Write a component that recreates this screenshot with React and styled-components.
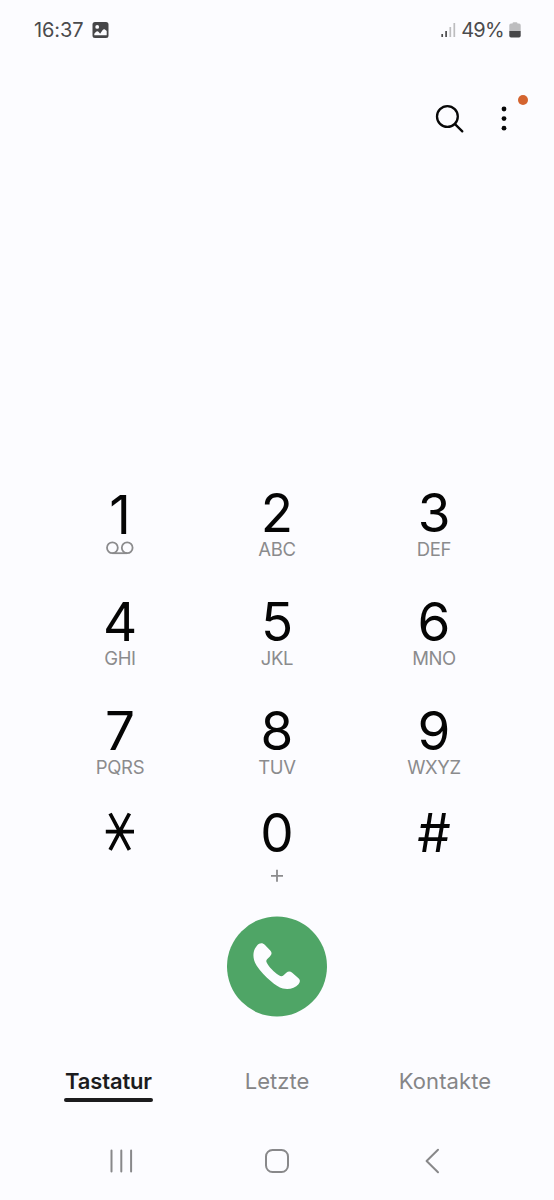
import React from 'react';
import styled, { createGlobalStyle } from 'styled-components';

const GlobalStyle = createGlobalStyle`
  * {
    box-sizing: border-box;
  }

  body {
    margin: 0;
    background: #fcfcff;
    font-family: Inter, 'Liberation Sans', sans-serif;
  }

  svg {
    display: block;
  }
`;

const Screen = styled.main`
  width: 554px;
  height: 1200px;
  display: flex;
  flex-direction: column;
  overflow: hidden;
  background: #fcfcff;
`;

const StatusBar = styled.header`
  height: 59px;
  padding: 0 33px 0 34px;
  display: flex;
  align-items: center;
  justify-content: space-between;
  color: #4b4b4d;
  font-size: 20px;
`;

const StatusGroup = styled.div`
  display: flex;
  align-items: center;
  gap: ${({ $gap }) => $gap}px;
`;

const StatusText = styled.span`
  letter-spacing: ${({ $spacing }) => $spacing}px;
  line-height: 24px;
`;

const Toolbar = styled.div`
  height: 117px;
  padding: 32px 23px 0 0;
  display: flex;
  justify-content: flex-end;
`;

const IconButton = styled.button`
  width: 55px;
  height: 55px;
  padding: 0;
  display: flex;
  align-items: center;
  justify-content: center;
  position: relative;
  border: 0;
  background: none;
`;

const Badge = styled.span`
  position: absolute;
  top: 4px;
  right: 3px;
  width: 10px;
  height: 10px;
  border-radius: 50%;
  background: #d4642f;
`;

const NumberDisplay = styled.div`
  height: 312px;
`;

const Keypad = styled.section`
  padding: 0 41.5px;
  display: grid;
  grid-template-columns: repeat(3, 157px);
  grid-template-rows: 109px 109px 102px 108px;
`;

const Key = styled.button`
  padding: 0;
  display: flex;
  flex-direction: column;
  align-items: center;
  border: 0;
  background: none;
  font-family: inherit;
`;

const Digit = styled.span`
  height: 50px;
  padding-top: ${({ $drop }) => $drop || 0}px;
  color: #050505;
  font-size: 53px;
  line-height: 50px;
`;

const Symbol = styled.span`
  height: 50px;
  padding-top: 4px;
`;

const Letters = styled.span`
  height: 22px;
  color: #8b8b8d;
  font-size: 18.5px;
  font-weight: 400;
  letter-spacing: -0.35px;
  line-height: 23px;
`;

const Voicemail = styled.span`
  padding-top: 3px;
`;

const Plus = styled.span`
  padding-top: 11px;
`;

const CallRow = styled.div`
  height: 101px;
  display: flex;
  justify-content: center;
`;

const CallButton = styled.button`
  width: 100px;
  height: 101px;
  padding: 0;
  border: 0;
  background: none;
`;

const Tabs = styled.nav`
  height: 105px;
  padding: 50px 30px 0;
  display: grid;
  grid-template-columns: 157px 180px 156px;
`;

const Tab = styled.button`
  height: 36px;
  padding: 0;
  justify-self: center;
  display: flex;
  flex-direction: column;
  border: 0;
  background: none;
  color: ${({ $active }) => ($active ? '#1c1c1e' : '#858587')};
  font-family: inherit;
  font-size: 22px;
  font-weight: ${({ $active }) => ($active ? 600 : 400)};
  letter-spacing: ${({ $spacing }) => $spacing}px;
  line-height: 28px;
`;

const TabLabel = styled.span`
  padding: 0 1px;
`;

const Underline = styled.span`
  align-self: stretch;
  height: 4px;
  margin-top: 3px;
  border-radius: 2px;
  background: #1c1c1e;
`;

const SystemNav = styled.footer`
  height: 78px;
  padding: 0 43.5px;
  display: grid;
  grid-template-columns: repeat(3, 155.5px);
  align-items: center;
  justify-items: center;
`;

const PhotoIcon = () => (
  <svg width="17" height="16" viewBox="-0.5 0 17 16">
    <path
      fillRule="evenodd"
      fill="#464648"
      d="M2.5 0h11A2.5 2.5 0 0 1 16 2.5v11a2.5 2.5 0 0 1-2.5 2.5h-11A2.5 2.5 0 0 1 0 13.5v-11A2.5 2.5 0 0 1 2.5 0ZM4.7 3a1.9 1.9 0 1 0 0 3.8 1.9 1.9 0 0 0 0-3.8ZM1.8 11.8c2-3 3.2-3.4 4.8-1.3l1 1.2 2.6-3.6c1-1.3 2-1.1 4 .9v4.2H1.8Z"
    />
  </svg>
);

const SignalIcon = () => (
  <svg width="15" height="16" viewBox="0 0 15 16">
    <path d="M1.2 12v3M5.1 9v6" stroke="#4b4b4d" strokeWidth="1.7" />
    <path d="M9.3 5v10M13.3 1v14" stroke="#bdbdbf" strokeWidth="1.7" />
  </svg>
);

const BatteryIcon = () => (
  <svg width="12" height="16" viewBox="0 0 12 16">
    <path d="M3.5 1.5Q3.5.3 4.7.3h2.6q1.2 0 1.2 1.2H10Q11.7 1.5 11.7 3.2V9H.3V3.2Q.3 1.5 2 1.5Z" fill="#bdbdbf" />
    <path d="M.3 9h11.4v4.7q0 1.8-1.7 1.8H2Q.3 15.5.3 13.7Z" fill="#464648" />
  </svg>
);

const SearchIcon = () => (
  <svg width="30" height="30" viewBox="0 0 30 30" fill="none" stroke="#080808" strokeWidth="2.3" strokeLinecap="round">
    <circle cx="13.4" cy="12.5" r="10.4" />
    <path d="m21 20.1 7.3 7.3" />
  </svg>
);

const MoreIcon = () => (
  <svg width="6" height="26" viewBox="0 0 6 26" fill="#080808">
    <circle cx="3" cy="3" r="2.4" />
    <circle cx="3" cy="12.6" r="2.4" />
    <circle cx="3" cy="22.2" r="2.4" />
  </svg>
);

const VoicemailIcon = () => (
  <svg width="28" height="14" viewBox="0 0 28 14" fill="none" stroke="#8b8b8d" strokeWidth="1.8">
    <circle cx="6.4" cy="6.8" r="5.4" />
    <circle cx="21.2" cy="6.8" r="5.4" />
    <path d="M6.4 12.2h14.8" />
  </svg>
);

const StarIcon = () => (
  <svg width="30" height="40" viewBox="0 0 30 40" stroke="#050505" strokeWidth="3.7">
    <path d="M.8 19.7H29M5.1 1.5l19.3 36.4M24.4 1.5 5.1 37.9" />
  </svg>
);

const PlusIcon = () => (
  <svg width="14" height="14" viewBox="0 0 14 14" stroke="#8b8b8d" strokeWidth="1.8">
    <path d="M1 6.8h12M7 .8v12" />
  </svg>
);

const PhoneIcon = () => (
  <svg width="100" height="101" viewBox="0 -0.5 100 101">
    <circle cx="50" cy="50" r="50" fill="#4fa566" />
    <path
      fill="#fcfcff"
      d="M29.9 29.2C32.5 26.3 35.5 26.1 38 28.5L43 33.7C45.1 36 45 37.7 42.9 39.9L40.3 42.4C39.2 43.5 39 44.5 39.7 46C42 50.6 46.8 55.4 51.9 58.8C53.8 60 55.2 60 56.6 58.7L59.3 56.2C61.3 54.5 63.3 54.6 65.2 56.2L71.2 61.5C73.4 63.5 73.4 65.4 71.5 67.8C68.2 71.9 61.6 73.5 55.9 72.1C51.9 71 48.2 68.3 43.7 64.5C38.8 60.3 33.5 54.8 29.7 49.2C25.3 42.4 25.3 34.5 29.9 29.2Z"
    />
  </svg>
);

const RecentsIcon = () => (
  <svg width="24" height="24" viewBox="0 0 24 24" stroke="#88888a" strokeWidth="2" strokeLinecap="round">
    <path d="M2.5 1.5v21M12.3 1.5v21M22.100 1.500v21" />
  </svg>
);

const HomeIcon = () => (
  <svg width="26" height="26" viewBox="0 0 26 26" fill="none" stroke="#88888a" strokeWidth="2">
    <rect x="2" y="2" width="22" height="22" rx="6.5" />
  </svg>
);

const BackIcon = () => (
  <svg width="16" height="26" viewBox="0 0 16 26" fill="none" stroke="#88888a" strokeWidth="2" strokeLinecap="round" strokeLinejoin="round">
    <path d="M14 1.8 2.6 13 14 24.2" />
  </svg>
);

const keys = [
  { digit: '1', drop: 2, extra: <Voicemail><VoicemailIcon /></Voicemail> },
  { digit: '2', letters: 'ABC' },
  { digit: '3', letters: 'DEF' },
  { digit: '4', letters: 'GHI' },
  { digit: '5', letters: 'JKL' },
  { digit: '6', letters: 'MNO' },
  { digit: '7', letters: 'PQRS' },
  { digit: '8', letters: 'TUV' },
  { digit: '9', letters: 'WXYZ' },
  { symbol: <StarIcon /> },
  { digit: '0', extra: <Plus><PlusIcon /></Plus> },
  { digit: '#' },
];

const App = () => {
  return (
    <>
      <GlobalStyle />
      <Screen>
        <StatusBar>
          <StatusGroup $gap={9}>
            <StatusText $spacing={-0.1}>16:37</StatusText>
            <PhotoIcon />
          </StatusGroup>
          <StatusGroup $gap={5}>
            <SignalIcon />
            <StatusText $spacing={-0.7}>49%</StatusText>
            <BatteryIcon />
          </StatusGroup>
        </StatusBar>
        <Toolbar>
          <IconButton aria-label="Suchen">
            <SearchIcon />
          </IconButton>
          <IconButton aria-label="Weitere Optionen">
            <MoreIcon />
            <Badge />
          </IconButton>
        </Toolbar>
        <NumberDisplay />
        <Keypad>
          {keys.map(({ digit, symbol, letters, extra, drop }, i) => (
            <Key key={i}>
              {digit ? <Digit $drop={drop}>{digit}</Digit> : <Symbol>{symbol}</Symbol>}
              {letters && <Letters>{letters}</Letters>}
              {extra}
            </Key>
          ))}
        </Keypad>
        <CallRow>
          <CallButton aria-label="Anrufen">
            <PhoneIcon />
          </CallButton>
        </CallRow>
        <Tabs>
          <Tab $active $spacing={-0.15}>
            <TabLabel>Tastatur</TabLabel>
            <Underline />
          </Tab>
          <Tab $spacing={0}>
            <TabLabel>Letzte</TabLabel>
          </Tab>
          <Tab $spacing={0.1}>
            <TabLabel>Kontakte</TabLabel>
          </Tab>
        </Tabs>
        <SystemNav>
          <RecentsIcon />
          <HomeIcon />
          <BackIcon />
        </SystemNav>
      </Screen>
    </>
  );
};

export default App;
